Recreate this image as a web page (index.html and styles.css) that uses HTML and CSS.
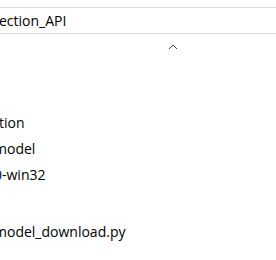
FILE: index.html
```html
<!DOCTYPE html>
<html lang="en">
<head>
  <meta charset="UTF-8" />
  <title>Explorer</title>
  <link rel="stylesheet" href="styles.css">
</head>
<body>
  <div class="address-bar">
    <span class="path cut-path">ection_API</span>
  </div>

  <div class="sort-row">
    <svg class="sort-chevron" width="10" height="6" viewBox="0 0 10 6">
      <polyline points="1,5 5,1 9,5" fill="none" stroke="#444" stroke-width="1"/>
    </svg>
  </div>

  <ul class="file-list">
    <li><span class="name cut-tion">tion</span></li>
    <li><span class="name cut-m">model</span></li>
    <li><span class="name cut-zero">0-win32</span></li>
    <li class="gap"></li>
    <li><span class="name cut-m">model_download.py</span></li>
  </ul>
</body>
</html>
```

FILE: styles.css
```css
:root {
  --text-color: #000;
  --line-color: #d9d9d9;
  --chevron-color: #444;
}

html, body {
  margin: 0;
  padding: 0;
  background: #fff;
  overflow: hidden;
}

body {
  font-family: 'Open Sans', 'Noto Sans', sans-serif;
  font-size: 14px;
  color: var(--text-color);
  width: 276px;
  height: 260px;
}

.address-bar {
  margin-top: 7px;
  height: 25px;
  line-height: 25px;
  border-top: 1px solid var(--line-color);
  border-bottom: 1px solid var(--line-color);
  overflow: hidden;
  white-space: nowrap;
}

.cut-path {
  display: inline-block;
  margin-left: -1px;
}

.sort-row {
  display: flex;
  height: 76px;
  padding-left: 168px;
  padding-top: 10px;
  box-sizing: border-box;
}

.sort-chevron {
  display: block;
}

.file-list {
  list-style: none;
  margin: 0;
  padding: 0;
}

.file-list li {
  height: 26px;
  line-height: 26px;
  overflow: hidden;
  white-space: nowrap;
}

.file-list li.gap {
  height: 31px;
}

.name {
  display: inline-block;
}

.cut-tion { margin-left: -1px; }
.cut-m { margin-left: -6px; }
.cut-zero { margin-left: -6px; }
```
